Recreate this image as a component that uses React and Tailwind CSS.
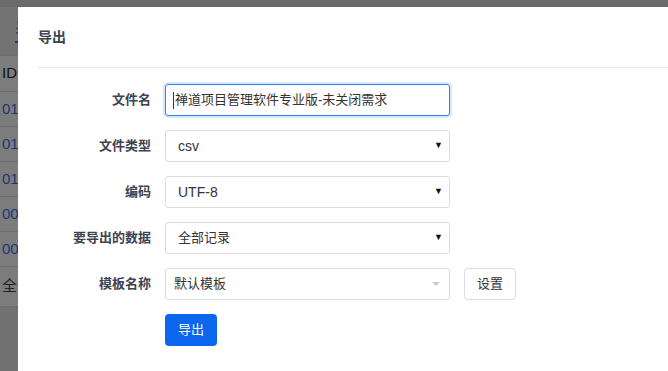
import React from "react"

const rows = [
  { label: "文件名", type: "input", value: "禅道项目管理软件专业版-未关闭需求" },
  { label: "文件类型", type: "select", value: "csv", latin: true },
  { label: "编码", type: "select", value: "UTF-8", latin: true },
  { label: "要导出的数据", type: "select", value: "全部记录" },
  { label: "模板名称", type: "chosen", value: "默认模板" },
]

const bgRows = ["ID", "01", "01", "01", "00", "00", "全"]

function Field({ row }) {
  if (row.type === "input") {
    return (
      <div className="w-[285px] h-[32px] border border-[#2e7ff5] rounded-[3px] shadow-[0_0_0_2px_rgba(46,127,245,0.18)] flex items-center px-[7px] text-[13px] text-[#333]">
        <span className="w-px h-[17px] bg-[#333] mr-px" />
        {row.value}
      </div>
    )
  }
  if (row.type === "chosen") {
    return (
      <div className="flex items-center gap-[14px]">
        <div className="w-[285px] h-[32px] border border-[#d9dce1] rounded-[3px] flex items-center justify-between pl-[8px] pr-[8px] text-[13px] text-[#333]">
          <span>{row.value}</span>
          <span className="w-0 h-0 border-l-[4px] border-r-[4px] border-t-[4px] border-l-transparent border-r-transparent border-t-[#c8ccd3] mr-[1px]" />
        </div>
        <button className="w-[52px] h-[32px] border border-[#d9dce1] rounded-[4px] bg-white text-[13px] text-[#333]">
          设置
        </button>
      </div>
    )
  }
  return (
    <div className="w-[285px] h-[32px] border border-[#d9dce1] rounded-[3px] flex items-center justify-between pl-[12px] pr-[6px] text-[#333]">
      <span className={row.latin ? "text-[14px]" : "text-[13px]"}>{row.value}</span>
      <span className="text-[9px] text-[#111]">▼</span>
    </div>
  )
}

export default function App() {
  return (
    <div
      className="relative w-[668px] h-[371px] overflow-hidden bg-[#727272]"
      style={{ fontFamily: '"Liberation Sans", "Noto Sans CJK SC", sans-serif' }}
    >
      <div className="h-[7px] bg-[#6b6b6b]" />
      <div className="h-[48px] bg-[#737373] flex items-center pl-[15px]">
        <span className="text-[18px] text-[#1e3a7a] border-b-2 border-[#1e3a7a] leading-[22px]">表</span>
      </div>
      <div className="bg-[#7c7c7c]">
        {bgRows.map((t, i) => (
          <div
            key={i}
            className={
              "border-t border-[#6e6e6e] flex items-center pl-[2px] text-[15px] " +
              (i === 0 ? "h-[36px] text-[#111]" : i === 6 ? "h-[40px] text-[#222]" : "h-[35px] text-[#1c3478]")
            }
          >
            {t}
          </div>
        ))}
      </div>
      <div className="border-t border-[#6e6e6e]" />

      <div className="absolute left-[18px] top-[7px] w-[700px] h-[400px] bg-white">
        <div className="px-[20px] pt-[20px] h-[60px] text-[14px] font-bold text-[#3c4353]">导出</div>
        <div className="ml-[20px] border-t border-[#e8e8e8]" />
        <div className="pt-[16px] flex flex-col gap-[14px]">
          {rows.map((row) => (
            <div key={row.label} className="flex items-center">
              <div className="w-[147px] text-right text-[13px] font-bold text-[#3c4353] pr-[14px]">
                {row.label}
              </div>
              <Field row={row} />
            </div>
          ))}
          <div className="pl-[147px]">
            <button className="w-[52px] h-[32px] rounded-[4px] bg-[#0c66ed] text-white text-[13px]">导出</button>
          </div>
        </div>
      </div>
    </div>
  )
}
